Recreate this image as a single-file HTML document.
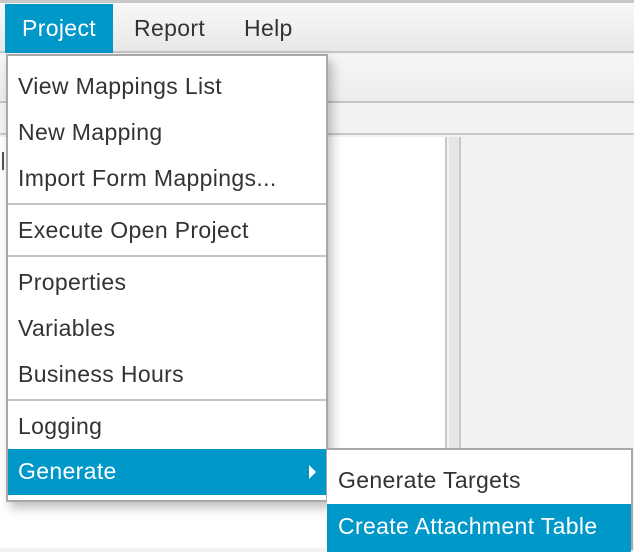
<!DOCTYPE html>
<html><head><style>
body{margin:0;width:634px;height:548px;overflow:hidden;background:#f2f2f2;font-family:"Liberation Sans",sans-serif;position:relative}
div{position:absolute;box-sizing:border-box}
.t{font-size:23px;letter-spacing:0.35px;color:#333;white-space:nowrap;line-height:46px;left:10px}
.sep{left:0;right:0;height:2px;background:#c4c4c4}
</style></head><body>
<div style="left:0;top:0;width:634px;height:3px;background:#c8c8c8"></div>
<div style="left:0;top:3px;width:634px;height:50px;background:linear-gradient(#f8f8f8,#e8e8e8);border-bottom:2px solid #c4c4c4"></div>
<div style="left:5px;top:4px;width:108px;height:49px;background:#0098c9"></div>
<div class="t" style="left:22px;top:5px;color:#fff">Project</div>
<div class="t" style="left:134px;top:5px">Report</div>
<div class="t" style="left:244px;top:5px">Help</div>
<div style="left:0;top:55px;width:634px;height:48px;background:linear-gradient(#f6f6f6,#ececec);border-bottom:2px solid #c4c4c4"></div>
<div style="left:0;top:105px;width:634px;height:30px;background:#f2f2f2;border-bottom:2px solid #c8c8c8"></div>
<div style="left:0;top:137px;width:447px;height:411px;background:#fff;border-right:2px solid #c8c8c8"></div>
<div style="left:2px;top:152px;width:2px;height:18px;background:#555"></div>
<div style="left:449px;top:137px;width:12px;height:411px;background:#e6e6e6;border-right:2px solid #c8c8c8"></div>
<div style="left:6px;top:54px;width:322px;height:448px;background:#fff;border:2px solid #a8a8a8;box-shadow:4px 6px 10px rgba(0,0,0,.25)">
<div class="t" style="top:7px">View Mappings List</div>
<div class="t" style="top:53px">New Mapping</div>
<div class="t" style="top:99px">Import Form Mappings...</div>
<div class="sep" style="top:147px"></div>
<div class="t" style="top:151px">Execute Open Project</div>
<div class="sep" style="top:199px"></div>
<div class="t" style="top:203px">Properties</div>
<div class="t" style="top:249px">Variables</div>
<div class="t" style="top:295px">Business Hours</div>
<div class="sep" style="top:343px"></div>
<div class="t" style="top:347px">Logging</div>
<div style="left:0;right:0;top:393px;height:46px;background:#0098c9"></div>
<div class="t" style="top:392px;color:#fff">Generate</div>
<div style="left:301px;top:409px;width:0;height:0;border-top:7px solid transparent;border-bottom:7px solid transparent;border-left:7px solid #fff"></div>
</div>
<div style="left:327px;top:448px;width:306px;height:102px;background:#fff;border:2px solid #a8a8a8;border-left:0">
<div class="t" style="top:7px;left:11px">Generate Targets</div>
<div style="left:0;right:0;top:54px;height:48px;background:#0098c9"></div>
<div class="t" style="top:53px;left:11px;color:#fff">Create Attachment Table</div>
</div>
</body></html>
